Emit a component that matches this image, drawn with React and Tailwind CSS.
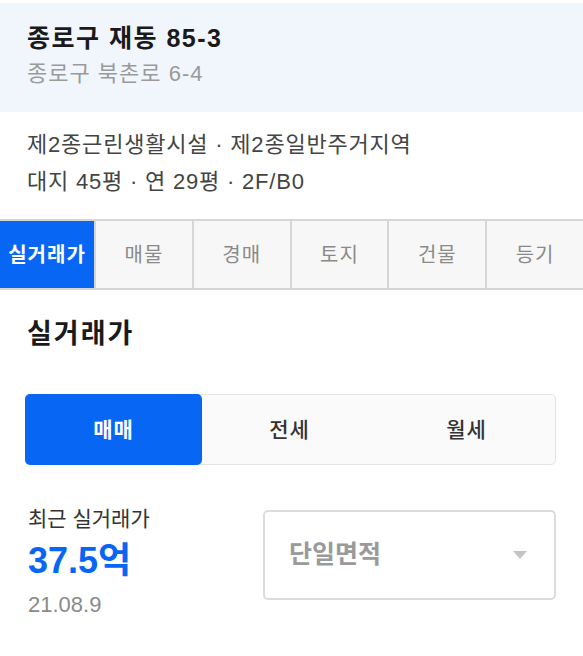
import React, { useState } from "react";

const tabs = ["실거래가", "매물", "경매", "토지", "건물", "등기"];
const dealTypes = ["매매", "전세", "월세"];

const App = () => {
  const [tab, setTab] = useState(0);
  const [deal, setDeal] = useState(0);

  return (
    <div
      className="w-[583px] h-[656px] bg-white overflow-hidden"
      style={{
        fontFamily: '"Liberation Sans", "Noto Sans CJK KR", sans-serif',
      }}
    >
      {/* Address header */}
      <div className="mt-[3px] h-[109px] bg-[#f1f6fd] pl-[27px] pt-[18px]">
        <div className="text-[25px] font-bold leading-[34px] tracking-[1.5px] text-[#1a1a1a]">
          종로구 재동 85-3
        </div>
        <div className="text-[22px] leading-[38px] tracking-[1px] text-[#9a9a9a]">
          종로구 북촌로 6-4
        </div>
      </div>

      {/* Building summary */}
      <div className="h-[107px] pl-[27px] pt-[14px] text-[22px] leading-[37px] tracking-[0.8px] text-[#444]">
        <div>제2종근린생활시설 · 제2종일반주거지역</div>
        <div>대지 45평 · 연 29평 · 2F/B0</div>
      </div>

      {/* Tabs */}
      <div className="flex h-[71px] border-y-2 border-[#d6d6d6] bg-[#f7f7f7]">
        {tabs.map((t, i) => (
          <button
            key={t}
            onClick={() => setTab(i)}
            className={`flex items-center justify-center text-[20px] tracking-[1px] ${
              i === 0 ? "w-[94px]" : "flex-1"
            } ${i > 0 ? "border-l-2 border-[#d6d6d6]" : ""} ${
              tab === i
                ? "bg-[#0866f5] font-bold text-white"
                : "text-[#8a8a8a]"
            }`}
          >
            {t}
          </button>
        ))}
      </div>

      {/* Section */}
      <div className="px-[25px] pt-[27px]">
        <h2 className="pl-[2px] text-[27px] font-bold leading-[34px] tracking-[2px] text-[#1a1a1a]">
          실거래가
        </h2>

        <div className="mt-[43px] flex h-[71px] w-[531px] rounded-[5px] border border-[#e3e3e3] bg-[#fafafa]">
          {dealTypes.map((d, i) => (
            <button
              key={d}
              onClick={() => setDeal(i)}
              className={`flex flex-1 items-center justify-center rounded-[5px] text-[21px] tracking-[1px] ${
                deal === i
                  ? "-m-px bg-[#0866f5] font-bold text-white"
                  : "font-medium text-[#333]"
              }`}
            >
              {d}
            </button>
          ))}
        </div>

        <div className="mt-[40px] flex">
          <div className="w-[238px] pl-[3px]">
            <div className="text-[21px] leading-[28px] text-[#333]">
              최근 실거래가
            </div>
            <div className="text-[36px] font-bold leading-[56px] text-[#0866f5]">
              37.5억
            </div>
            <div className="mt-[2px] text-[22px] leading-[28px] text-[#8a8a8a]">
              21.08.9
            </div>
          </div>
          <div className="mt-[5px] flex h-[90px] w-[293px] items-center justify-between rounded-[5px] border-2 border-[#dcdcdc] pl-[24px] pr-[26px]">
            <span className="text-[25px] font-bold text-[#9a9a9a]">단일면적</span>
            <svg width="16" height="10" viewBox="0 0 16 10">
              <path d="M1 1 L15 1 L8 9 Z" fill="#c4c4c4" />
            </svg>
          </div>
        </div>
      </div>
    </div>
  );
};

export default App;
